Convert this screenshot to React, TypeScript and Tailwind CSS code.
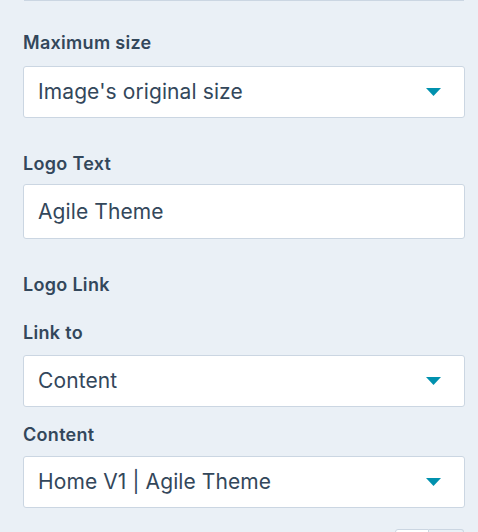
import React from "react";

function Caret() {
  return (
    <svg width="15" height="8" viewBox="0 0 15 8" className="shrink-0">
      <path d="M0 0 H15 L7.5 8 Z" fill="#0091ae" />
    </svg>
  );
}

function SelectBox({ value, caret = true, h = "h-[52px]" }: { value: string; caret?: boolean; h?: string }) {
  return (
    <div
      className={`${h} w-[442px] bg-white border border-[#cbd6e2] rounded-[3px] flex items-center justify-between pl-[14px] pr-[23px]`}
    >
      <span className="text-[21px] leading-[24px] tracking-[0.1px] text-[#33475b]">{value}</span>
      {caret ? <Caret /> : null}
    </div>
  );
}

function Label({ children, className = "" }: { children: React.ReactNode; className?: string }) {
  return (
    <div className={`text-[18px] leading-[20px] tracking-[0.3px] font-semibold text-[#33475b] ${className}`}>{children}</div>
  );
}

export default function App() {
  return (
    <div className="w-[478px] h-[532px] overflow-hidden bg-[#eaf0f6] font-['Inter',sans-serif]">
      <div className="ml-[24px] w-[440px] h-px bg-[#cbd6e2]" />
      <div className="pl-[23px]">
        <Label className="mt-[32px] mb-[13px]">Maximum size</Label>
        <SelectBox value="Image's original size" />
        <Label className="mt-[36px] mb-[10px]">Logo Text</Label>
        <SelectBox value="Agile Theme" caret={false} h="h-[55px]" />
        <Label className="mt-[36px]">Logo Link</Label>
        <Label className="mt-[28px] mb-[12px]">Link to</Label>
        <SelectBox value="Content" />
        <Label className="mt-[18px] mb-[11px]">Content</Label>
        <SelectBox value="Home V1 | Agile Theme" />
        <div className="flex justify-end pr-[14px] mt-[21px]">
          <div className="w-[34px] h-[10px] bg-white border border-[#cbd6e2] rounded-l-[3px]" />
          <div className="w-[35px] h-[10px] bg-[#eaf0f6] border border-l-0 border-[#cbd6e2] rounded-r-[3px]" />
        </div>
      </div>
    </div>
  );
}
